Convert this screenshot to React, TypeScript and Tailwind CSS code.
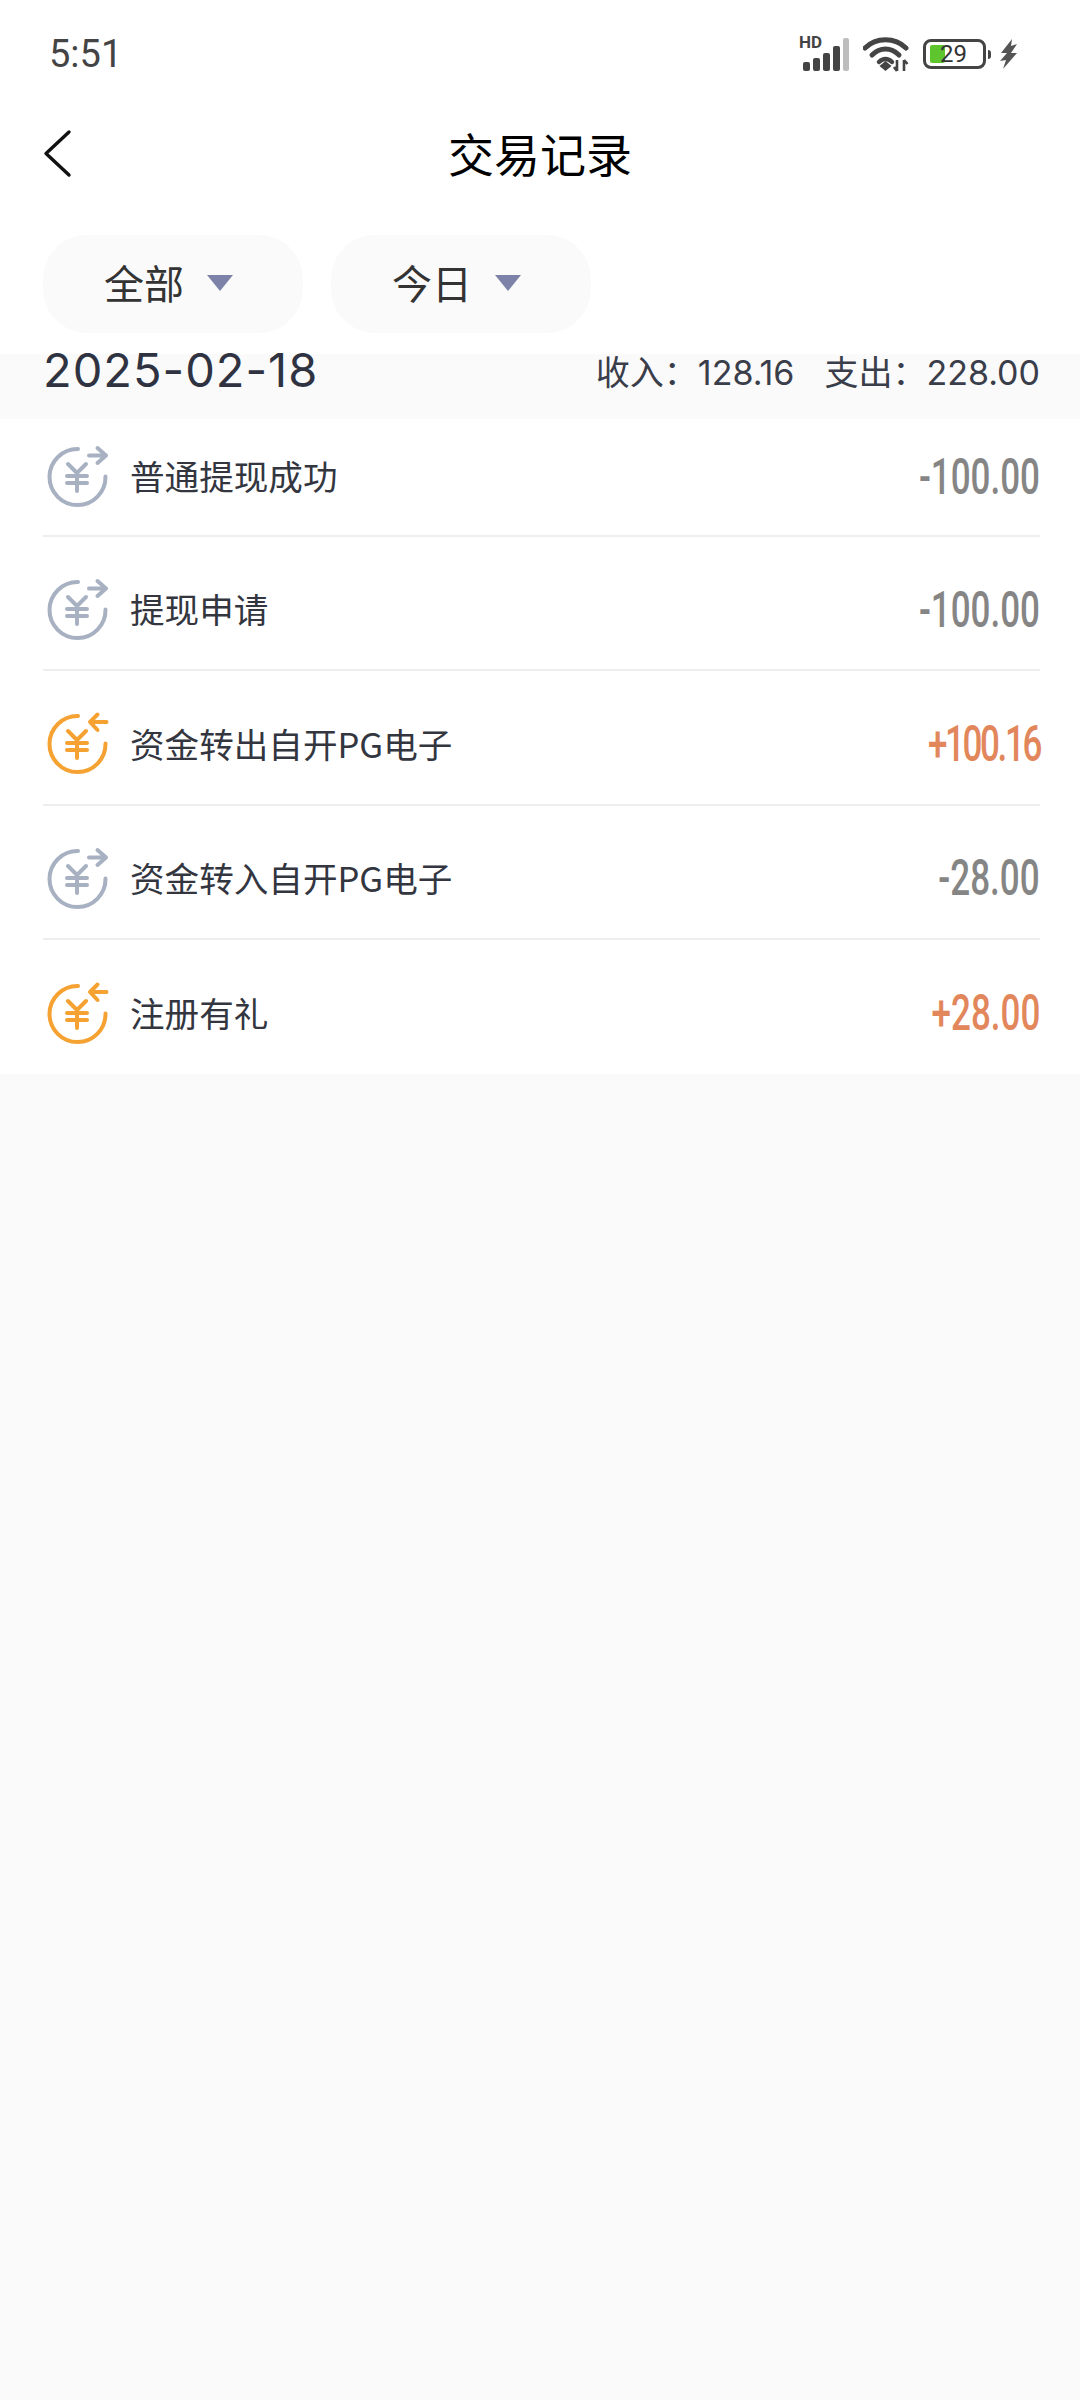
import React from 'react';

const cjk = { fontFamily: '"Noto Sans CJK SC", "Noto Sans", sans-serif' };

const records = [
  { title: '普通提现成功', amount: '-100.00', income: false, tight: false },
  { title: '提现申请', amount: '-100.00', income: false, tight: false },
  { title: '资金转出自开PG电子', amount: '+100.16', income: true, tight: true },
  { title: '资金转入自开PG电子', amount: '-28.00', income: false, tight: false },
  { title: '注册有礼', amount: '+28.00', income: true, tight: false },
];

function MoneyIcon({ income }: { income: boolean }) {
  const color = income ? '#f5a233' : '#a7b1c2';
  return (
    <svg width="60" height="60" viewBox="0 0 60 60" fill="none" stroke={color} strokeWidth="4" strokeLinecap="round" strokeLinejoin="round" className="overflow-visible shrink-0">
      <path d="M31 2A28 28 0 1 0 58.5 29.5" />
      {income ? (
        <path d="M59.5 8H44M50.5 0.5L43 8L50.5 16" />
      ) : (
        <path d="M42 8.5H59M50.5 1L59 8.5L50.5 16" />
      )}
      <path d="M21 17L30 26L39 17M20 29H40M20 36H40M30 26V44" />
    </svg>
  );
}

function StatusIcons() {
  return (
    <div className="flex items-center">
      <div className="relative w-[50px] h-[34px]">
        <span className="absolute left-[-1px] top-[-3px] text-[17px] leading-[16px] font-bold text-[#444]" style={{ fontFamily: 'Roboto, sans-serif' }}>HD</span>
        <svg width="50" height="34" viewBox="0 0 50 34" className="absolute left-0 top-0">
          <rect x="3" y="25" width="7" height="9" rx="2" fill="#444" />
          <rect x="13" y="21" width="7" height="13" rx="2" fill="#444" />
          <rect x="23" y="16" width="7" height="18" rx="2" fill="#444" />
          <rect x="33" y="9" width="7" height="25" rx="2" fill="#444" />
          <rect x="43" y="1" width="6" height="33" rx="2" fill="#bdbdbd" />
        </svg>
      </div>
      <svg width="48" height="38" viewBox="0 0 48 38" fill="none" className="ml-[13px]">
        <path d="M2 13C13 2 32 2 43 13" stroke="#444" strokeWidth="5" strokeLinecap="round" />
        <path d="M9 20C17 12 28 12 36 20" stroke="#444" strokeWidth="5" strokeLinecap="round" />
        <path d="M16 27C20 23 25 23 29 27" stroke="#444" strokeWidth="4.5" strokeLinecap="round" />
        <path d="M16.5 31L22.5 26L28.5 31L22.5 36Z" fill="#444" />
        <path d="M34 25V36M31 32L34 36M41 36V25M41 25L44.5 29" stroke="#444" strokeWidth="2.6" />
      </svg>
      <div className="relative ml-[12px] w-[63px] h-[30px] rounded-[8px] border-[3px] border-[#444] flex items-center">
        <div className="absolute left-[4px] top-[3px] w-[15px] h-[18px] rounded-[2px] bg-[#5fc52e]" />
        <span className="relative ml-[14px] text-[24px] leading-none text-[#333]" style={{ fontFamily: 'Roboto, sans-serif' }}>29</span>
      </div>
      <div className="ml-[2px] w-[3px] h-[9px] rounded-r-sm bg-[#444]" />
      <svg width="20" height="30" viewBox="0 0 20 30" className="ml-[8px]">
        <path d="M13 0L2 14L8 14L1 22L7 21L4 30L18 14L12 14L18 5L12 7Z" fill="#555" />
      </svg>
    </div>
  );
}

function FilterPill({ label }: { label: string }) {
  return (
    <div className="w-[260px] h-[98px] rounded-[44px] bg-[#fafafa] flex items-center pl-[61px]">
      <span className="text-[40px] leading-none mt-[-4px] text-[#333]" style={cjk}>{label}</span>
      <div className="ml-[23px] mt-[-3px] w-0 h-0 border-l-[13px] border-r-[13px] border-t-[16px] border-l-transparent border-r-transparent border-t-[#7d83a8]" />
    </div>
  );
}

export default function App() {
  return (
    <div className="min-h-[2400px] bg-[#fafafa]" style={cjk}>
      <div className="bg-white">
        {/* Status bar */}
        <div className="h-[108px] flex items-center justify-between pl-[49px] pr-[61px]">
          <span className="text-[38px] font-[450] text-[#444]" style={{ fontFamily: 'Roboto, sans-serif' }}>5:51</span>
          <StatusIcons />
        </div>

        {/* Nav */}
        <div className="relative h-[90px] flex items-center justify-center">
          <svg width="30" height="50" viewBox="0 0 30 50" fill="none" className="absolute left-[43px] top-[21px]">
            <path d="M26 3L3 24.5L26 46" stroke="#111" strokeWidth="3.4" strokeLinecap="round" strokeLinejoin="round" />
          </svg>
          <h1 className="text-[46px] leading-none mt-[-3px] font-normal text-black">交易记录</h1>
        </div>

        {/* Filters */}
        <div className="flex gap-[28px] pl-[43px] pt-[37px] pb-[21px]">
          <FilterPill label="全部" />
          <FilterPill label="今日" />
        </div>

        {/* Date summary */}
        <div className="h-[65px] bg-[#fafafa] flex items-start justify-between pl-[43px] pr-[40px]">
          <span className="text-[47px] leading-[36px] mt-[-2px] tracking-[1px] text-[#2f3341]" style={{ fontFamily: 'Inter, sans-serif' }}>2025-02-18</span>
          <div className="flex text-[34px] leading-[36px] mt-[1px] text-[#3a3d4a]">
            <span style={{ fontFamily: 'Inter, "Noto Sans CJK SC", sans-serif' }}>收入：128.16</span>
            <span className="ml-[30px]" style={{ fontFamily: 'Inter, "Noto Sans CJK SC", sans-serif' }}>支出：228.00</span>
          </div>
        </div>

        {/* Records */}
        <div className="pl-[43px] pr-[40px]">
          {records.map((r, i) => (
            <div
              key={i}
              className={`flex items-center ${i === 0 ? 'h-[118px]' : 'h-[134.25px] pt-[14px]'} ${i < records.length - 1 ? 'border-b-2 border-[#eeeeee]' : ''}`}
            >
              <div className="ml-[4px]">
                <MoneyIcon income={r.income} />
              </div>
              <span className="ml-[23px] mt-[-3px] text-[34.6px] leading-none text-[#33363f]">{r.title}</span>
              <div className="ml-auto w-[160px] flex justify-end">
                <span
                  className={`inline-block origin-right scale-x-[0.7] whitespace-nowrap text-[50px] leading-none mt-[-1px] font-medium ${r.tight ? 'tracking-[-3.4px]' : ''} ${r.income ? 'text-[#e2875c]' : 'text-[#858585]'}`}
                  style={{ fontFamily: 'Roboto, sans-serif' }}
                >
                  {r.amount}
                </span>
              </div>
            </div>
          ))}
        </div>
      </div>
    </div>
  );
}
